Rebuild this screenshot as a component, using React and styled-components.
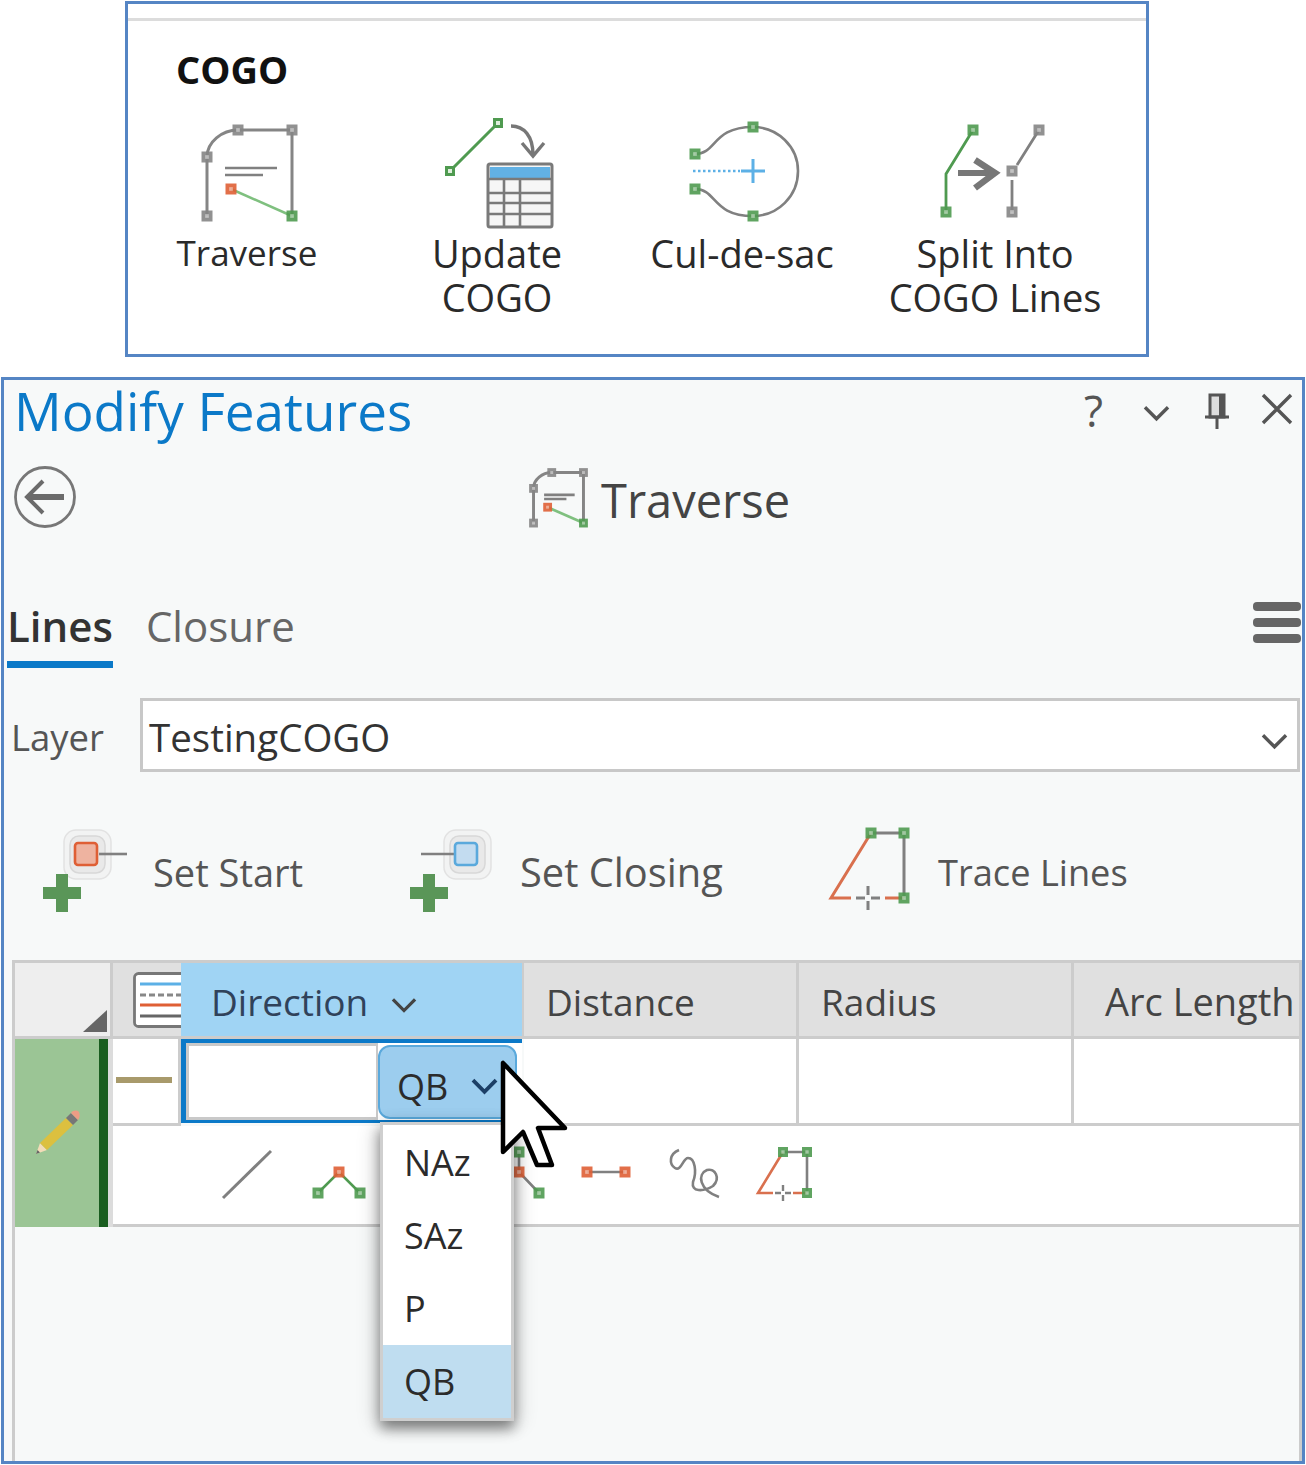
import styled, { createGlobalStyle } from "styled-components";

const GlobalStyle = createGlobalStyle`
  html, body {
    margin: 0;
    padding: 0;
    background: #fff;
  }
  * {
    box-sizing: border-box;
  }
  body {
    font-family: "Open Sans", "Noto Sans", sans-serif;
  }
`;

const GREEN = "#4f9a50";
const GREY = "#858585";
const RED = "#df5f35";

const Page = styled.div`
  width: 1306px;
  height: 1465px;
  padding-top: 1px;
  overflow: hidden;
`;

const Ribbon = styled.section`
  margin-left: 125px;
  width: 1024px;
  height: 356px;
  border: 3px solid #5585c4;
  background: #fff;
`;

const RibbonStrip = styled.div`
  height: 17px;
  border-bottom: 3px solid #dcdcdc;
`;

const RibbonTitle = styled.h2`
  margin: 23px 0 0 48px;
  font-size: 38px;
  line-height: 50px;
  font-weight: 700;
  color: #111;
`;

const ToolRow = styled.div`
  display: flex;
  margin-top: 24px;
`;

const Tool = styled.div`
  display: flex;
  flex-direction: column;
  align-items: center;
  width: ${(p) => p.$w}px;
`;

const ToolLabel = styled.div`
  font-size: ${(p) => p.$size || 38}px;
  line-height: 44px;
  color: #2a2a2a;
  text-align: center;
  white-space: nowrap;
  margin-top: 1px;
`;

const Glyph = styled.svg`
  display: block;
  flex: none;
  width: ${(p) => p.$w}px;
  height: ${(p) => p.$h}px;
  overflow: visible;
`;

const Panel = styled.section`
  margin: 20px 0 0 1px;
  width: 1304px;
  height: 1087px;
  border: 3px solid #5585c4;
  background: #f7f9f9;
  display: flex;
  flex-direction: column;
`;

const TitleBar = styled.header`
  display: flex;
  align-items: center;
  height: 66px;
  padding-left: 10px;
`;

const PanelTitle = styled.h1`
  margin: 0 0 4px;
  font-size: 53px;
  line-height: 62px;
  font-weight: 400;
  color: #0b79c8;
  white-space: nowrap;
`;

const WindowIcons = styled.div`
  margin-left: auto;
  display: flex;
  align-items: center;
  gap: 27px;
  padding-right: 9px;
`;

const HelpMark = styled.span`
  font-size: 44px;
  line-height: 56px;
  font-weight: 500;
  color: #555;
  margin: 0 14px 6px 0;
`;

const PinSlot = styled.span`
  display: block;
  margin: 0 0 2px 8px;
`;

const CloseSlot = styled.span`
  display: block;
  margin: 0 0 8px 4px;
`;

const BackRow = styled.div`
  display: flex;
  align-items: center;
  height: 102px;
  padding-left: 10px;
`;

const ToolHeading = styled.div`
  display: flex;
  align-items: center;
  gap: 14px;
  margin-left: 454px;
  font-size: 47px;
  color: #444;
`;

const HeadingText = styled.span`
  padding-top: 6px;
`;

const TabRow = styled.div`
  display: flex;
  align-items: flex-start;
  padding-top: 50px;
  height: 120px;
`;

const Tab = styled.div`
  height: 70px;
  margin-left: ${(p) => p.$ml}px;
  font-size: 42px;
  line-height: 56px;
  color: ${(p) => (p.$active ? "#333" : "#666")};
  font-weight: ${(p) => (p.$active ? 600 : 400)};
  border-bottom: ${(p) => (p.$active ? "7px solid #0b79c8" : "none")};
`;

const MenuBars = styled.div`
  margin-left: auto;
  margin-right: 1px;
  margin-top: 4px;
  width: 48px;
  display: flex;
  flex-direction: column;
  gap: 7px;
`;

const MenuBar = styled.span`
  display: block;
  height: 9px;
  border-radius: 4px;
  background: #666;
`;

const LayerRow = styled.div`
  display: flex;
  align-items: center;
  margin-top: 30px;
  padding-left: 7px;
`;

const LayerLabel = styled.label`
  width: 129px;
  padding-top: 4px;
  font-size: 36.5px;
  color: #555;
`;

const LayerSelect = styled.div`
  width: 1160px;
  height: 74px;
  border: 3px solid #c8c8c8;
  background: #fff;
  display: flex;
  align-items: center;
  justify-content: space-between;
  padding: 4px 10px 0 6px;
  font-size: 38.5px;
  color: #333;
`;

const ChevronSlot = styled.span`
  display: block;
  margin-top: 8px;
`;

const ActionRow = styled.div`
  display: flex;
  margin-top: 55px;
  height: 85px;
  padding-left: 39px;
`;

const Action = styled.div`
  display: flex;
  align-items: center;
  width: ${(p) => p.$w}px;
  font-size: ${(p) => p.$size}px;
  color: #555;
  white-space: nowrap;
`;

const ActionText = styled.span`
  margin-left: ${(p) => p.$ml}px;
  padding-top: 4px;
`;

const TableWrap = styled.div`
  flex: 1;
  margin: 48px 0 0 8px;
  border-top: 3px solid #ccc;
  border-left: 3px solid #ccc;
  border-right: 3px solid #ccc;
`;

const Grid = styled.div`
  display: grid;
  grid-template-columns: 98px 68px 343px 275px 275px 1fr;
  grid-template-rows: 76px 87px 101px;
`;

const HeadCell = styled.div`
  display: flex;
  align-items: center;
  padding-left: ${(p) => p.$pl || 0}px;
  padding-top: ${(p) => (p.$icon ? 0 : 3)}px;
  background: ${(p) => p.$bg || "#e0e0e0"};
  border-bottom: 3px solid #ccc;
  border-right: ${(p) => (p.$last ? 0 : 3)}px solid #ccc;
  font-size: ${(p) => p.$size || 37}px;
  color: #444;
  white-space: nowrap;
  overflow: hidden;
  position: relative;
`;

const CornerMark = styled.span`
  position: absolute;
  right: 3px;
  bottom: 4px;
  width: 0;
  height: 0;
  border-left: 24px solid transparent;
  border-bottom: 22px solid #666;
`;

const DirectionHead = styled(HeadCell)`
  gap: 24px;
  background: #a0d4f4;
  border-right: 2px solid #ccc;
  color: #30425a;
`;

const EditMarker = styled.div`
  grid-row: 2 / span 2;
  display: flex;
  align-items: center;
  justify-content: center;
  padding-right: 10px;
  background: #9bc595;
  border-right: 5px solid #dcdcdc;
  box-shadow: inset -9px 0 0 #1a5e20;
`;

const Cell = styled.div`
  display: flex;
  align-items: center;
  background: #fff;
  border-bottom: 3px solid #ccc;
  border-right: ${(p) => (p.$last ? 0 : 3)}px solid #ccc;
`;

const LeadCell = styled(Cell)`
  padding: 0 0 2px 3px;
`;

const EditCell = styled.div`
  display: flex;
  background: #fff;
  margin: 0 2px 3px 0;
  border: 0 solid #0b79c8;
  border-width: 4px 0 3px 5px;
  padding: 2px 5px 0 0;
`;

const EditInput = styled.div`
  flex: 1;
  margin-top: -2px;
  border: 3px solid #c9c9c9;
  border-right-width: 2px;
  background: #fff;
`;

const UnitButton = styled.div`
  position: relative;
  width: 139px;
  height: 74px;
  display: flex;
  align-items: center;
  gap: 24px;
  padding: 8px 0 0 17px;
  border: 2px solid #5aa9dc;
  border-radius: 12px;
  background: #9ccdee;
  font-size: 36px;
  color: #2b2b2b;
`;

const UnitMenu = styled.ul`
  position: absolute;
  top: 75px;
  left: 0;
  z-index: 2;
  width: 134px;
  margin: 0;
  padding: 1px 0 0;
  list-style: none;
  border: 3px solid #cfcfcf;
  background: #fff;
  box-shadow: 0 8px 12px rgba(0, 0, 0, 0.38), 6px 4px 18px rgba(0, 0, 0, 0.14),
    -6px 4px 18px rgba(0, 0, 0, 0.14);
`;

const UnitItem = styled.li`
  height: 73px;
  padding-left: 21px;
  font-size: 36px;
  line-height: 73px;
  color: #2b2b2b;
  background: ${(p) => (p.$selected ? "#bfddf0" : "transparent")};
`;

const Cursor = styled.svg`
  position: absolute;
  left: 123px;
  top: 16px;
  z-index: 3;
  width: 66px;
  height: 106px;
  overflow: visible;
`;

const SegmentRow = styled.div`
  grid-column: 2 / -1;
  display: flex;
  gap: 31px;
  padding: 19px 0 0 107px;
  background: #fff;
  border-bottom: 3px solid #ccc;
`;

// small square vertex used by every map icon, coordinates are the picture's own
function Vertex({ x, y, color = GREY, size = 11 }) {
  const h = size / 2;
  return (
    <g>
      <rect x={x - h} y={y - h} width={size} height={size} fill={color} opacity="0.9" />
      <rect x={x - size / 6} y={y - size / 6} width={size / 3} height={size / 3} fill="#fff" opacity="0.45" />
    </g>
  );
}

function TraverseIcon({ w = 124, h = 112, box = "188 118 124 112", bold }) {
  const line = bold ? 5 : 3;
  const size = bold ? 15 : 11;
  return (
    <Glyph viewBox={box} $w={w} $h={h} fill="none">
      <path d="M207 216V157C207 142 222 130 238 130H292V216" stroke={GREY} strokeWidth={line} />
      <path d="M231 189L292 216" stroke="#7fc07f" strokeWidth={line - 0.5} />
      <path d="M225 168H277M225 175H263" stroke="#808080" strokeWidth={line - 0.5} />
      <Vertex x={207} y={157} size={size} />
      <Vertex x={238} y={130} size={size} />
      <Vertex x={292} y={130} size={size} />
      <Vertex x={207} y={216} size={size} />
      <Vertex x={292} y={216} color={GREEN} size={size} />
      <Vertex x={231} y={189} color={RED} size={size} />
    </Glyph>
  );
}

function UpdateIcon() {
  return (
    <Glyph viewBox="435 118 124 112" $w={124} $h={112} fill="none">
      <path d="M450 171L498 123" stroke={GREEN} strokeWidth="3" />
      <rect x="446.5" y="167.5" width="7" height="7" fill="#dfeedd" stroke={GREEN} strokeWidth="3" />
      <rect x="494.5" y="119.5" width="7" height="7" fill="#dfeedd" stroke={GREEN} strokeWidth="3" />
      <path d="M511 126C524 126 533 136 533 155M522 143L533 156L544 143" stroke="#777" strokeWidth="3.4" />
      <rect x="488" y="164" width="64" height="63" rx="2" fill="#f6f6f6" stroke="#7a7a7a" strokeWidth="3" />
      <rect x="490" y="167" width="60" height="11" fill="#62b1e4" />
      <path d="M489 179H551M489 193H551M489 203H551M489 214H551M504 179V226M520 179V226" stroke="#7a7a7a" strokeWidth="2.6" />
    </Glyph>
  );
}

function CulDeSacIcon() {
  return (
    <Glyph viewBox="680 118 124 112" $w={124} $h={112} fill="none">
      <path
        d="M695 154C717 154 712 127 753 127C778 127 798 147 798 171C798 196 778 216 753 216C712 216 717 189 695 189"
        stroke="#808080"
        strokeWidth="2.6"
      />
      <path d="M693 171H740" stroke="#5cb0e6" strokeWidth="2.6" strokeDasharray="2.5 2.5" />
      <path d="M741 171H765M753 159V183" stroke="#5cb0e6" strokeWidth="3" />
      <Vertex x={695} y={154} color={GREEN} />
      <Vertex x={753} y={127} color={GREEN} />
      <Vertex x={695} y={189} color={GREEN} />
      <Vertex x={753} y={216} color={GREEN} />
    </Glyph>
  );
}

function SplitIcon() {
  return (
    <Glyph viewBox="933 118 124 112" $w={124} $h={112} fill="none">
      <path d="M973 130L946 174V212" stroke={GREEN} strokeWidth="2.8" />
      <path d="M958 173H990" stroke="#777" strokeWidth="6" />
      <path d="M975 160L995 173L975 188" stroke="#777" strokeWidth="6.5" />
      <path d="M1039 130L1017 165M1012 180V212" stroke="#808080" strokeWidth="2.8" />
      <Vertex x={973} y={130} color={GREEN} />
      <Vertex x={946} y={212} color={GREEN} />
      <Vertex x={1039} y={130} />
      <Vertex x={1012} y={171} />
      <Vertex x={1012} y={212} />
    </Glyph>
  );
}

function Chevron({ w = 25, h = 14, color = "#555", sw = 3.5 }) {
  return (
    <Glyph viewBox="0 0 26 14" $w={w} $h={h} fill="none">
      <path d="M1 1L13 13L25 1" stroke={color} strokeWidth={sw} />
    </Glyph>
  );
}

function SetPointIcon({ closing }) {
  const fill = closing ? "#c3dcf0" : "#eeb3a0";
  const stroke = closing ? "#5aa9dc" : RED;
  const sq = closing ? 41 : 28;
  return (
    <Glyph viewBox="0 0 84 84" $w={84} $h={84} fill="none">
      <rect x={sq - 7} y="2" width="47" height="49" rx="12" fill="#f2f3f3" stroke="#e2e2e2" strokeWidth="1.5" />
      <rect x={sq - 1} y="8" width="35" height="37" rx="9" fill="#e9e9e9" stroke="#d8d8d8" strokeWidth="1.5" />
      <path d={closing ? "M11 26H45" : "M56 26H84"} stroke="#808080" strokeWidth="2.6" />
      <rect x={sq + 4} y="15" width="22" height="22" rx="3" fill={fill} stroke={stroke} strokeWidth="2.6" />
      <path d="M19 46V84M0 65H38" stroke="#5a9658" strokeWidth="12" />
    </Glyph>
  );
}

function TraceIcon({ w, h, box }) {
  return (
    <Glyph viewBox={box} $w={w} $h={h} fill="none">
      <path d="M870 833H903V898" stroke="#808080" strokeWidth="3" />
      <path d="M870 833L830 898H850M884 898H903" stroke="#d9704e" strokeWidth="3" />
      <path d="M855 898H879M867 886V910" stroke="#808080" strokeWidth="3" strokeDasharray="9 6" />
      <Vertex x={870} y={833} color={GREEN} size={11} />
      <Vertex x={903} y={833} color={GREEN} size={11} />
      <Vertex x={903} y={898} color={GREEN} size={11} />
    </Glyph>
  );
}

const originOf = (i) => `${220 + 89 * i - (i > 1 ? 1 : 0)} 1145 58 58`;

function SegmentIcons() {
  return (
    <SegmentRow>
      <Glyph viewBox={originOf(0)} $w={58} $h={58} fill="none">
        <path d="M223 1198L271 1151" stroke="#808080" strokeWidth="3" />
      </Glyph>
      <Glyph viewBox={originOf(1)} $w={58} $h={58} fill="none">
        <path d="M318 1193L339 1172L360 1193" stroke={GREEN} strokeWidth="2.6" />
        <Vertex x={318} y={1193} color={GREEN} />
        <Vertex x={339} y={1172} color={RED} />
        <Vertex x={360} y={1193} color={GREEN} />
      </Glyph>
      <Glyph viewBox={originOf(2)} $w={58} $h={58} fill="none" />
      <Glyph viewBox={originOf(3)} $w={58} $h={58} fill="none">
        <path d="M518 1152V1172L538 1193" stroke="#808080" strokeWidth="2.6" />
        <Vertex x={518} y={1152} color={GREEN} />
        <Vertex x={518} y={1172} color={RED} />
        <Vertex x={538} y={1193} color={GREEN} />
      </Glyph>
      <Glyph viewBox={originOf(4)} $w={58} $h={58} fill="none">
        <path d="M586 1172H624" stroke="#808080" strokeWidth="2.6" />
        <Vertex x={586} y={1172} color={RED} />
        <Vertex x={624} y={1172} color={RED} />
      </Glyph>
      <Glyph viewBox={originOf(5)} $w={58} $h={58} fill="none">
        <path
          d="M678 1150C668 1154 668 1164 674 1168C680 1172 682 1158 687 1158C694 1158 696 1172 692 1182C690 1192 702 1192 712 1186C720 1178 714 1168 706 1170C696 1174 698 1190 718 1197"
          stroke="#808080"
          strokeWidth="2.6"
        />
      </Glyph>
      <Glyph viewBox={originOf(6)} $w={58} $h={58} fill="none">
        <path d="M782 1152H806V1193" stroke="#808080" strokeWidth="2.6" />
        <path d="M782 1152L757 1193H772M792 1193H806" stroke="#d9704e" strokeWidth="2.6" />
        <path d="M774 1193H790M782 1185V1201" stroke="#808080" strokeWidth="2.4" strokeDasharray="6 4" />
        <Vertex x={782} y={1152} color={GREEN} size={10} />
        <Vertex x={806} y={1152} color={GREEN} size={10} />
        <Vertex x={806} y={1193} color={GREEN} size={10} />
      </Glyph>
    </SegmentRow>
  );
}

export default function App() {
  return (
    <Page>
      <GlobalStyle />
      <Ribbon>
        <RibbonStrip />
        <RibbonTitle>COGO</RibbonTitle>
        <ToolRow>
          <Tool $w={238}>
            <TraverseIcon box="185 118 124 112" />
            <ToolLabel $size={35}>Traverse</ToolLabel>
          </Tool>
          <Tool $w={262}>
            <UpdateIcon />
            <ToolLabel>
              Update
              <br />
              COGO
            </ToolLabel>
          </Tool>
          <Tool $w={228}>
            <CulDeSacIcon />
            <ToolLabel>Cul-de-sac</ToolLabel>
          </Tool>
          <Tool $w={278}>
            <SplitIcon />
            <ToolLabel>
              Split Into
              <br />
              COGO Lines
            </ToolLabel>
          </Tool>
        </ToolRow>
      </Ribbon>

      <Panel>
        <TitleBar>
          <PanelTitle>Modify Features</PanelTitle>
          <WindowIcons>
            <HelpMark>?</HelpMark>
            <Chevron />
            <PinSlot>
              <Glyph viewBox="0 0 26 36" $w={26} $h={36} fill="none">
                <path d="M6 1H20V23H6Z" fill="#ddd" stroke="#555" strokeWidth="3" />
                <path d="M15 1H21V23H15Z" fill="#555" />
                <path d="M1 23H25M13 23V35" stroke="#555" strokeWidth="3" />
              </Glyph>
            </PinSlot>
            <CloseSlot>
              <Glyph viewBox="0 0 32 32" $w={32} $h={32} fill="none">
                <path d="M2 2L30 30M30 2L2 30" stroke="#555" strokeWidth="3.4" />
              </Glyph>
            </CloseSlot>
          </WindowIcons>
        </TitleBar>

        <BackRow>
          <Glyph viewBox="0 0 62 62" $w={62} $h={62} fill="none">
            <circle cx="31" cy="31" r="29.5" stroke="#777" strokeWidth="2.8" />
            <path d="M13 31H50" stroke="#6b6b6b" strokeWidth="6" />
            <path d="M29 15L13 31L29 47" stroke="#6b6b6b" strokeWidth="4" />
          </Glyph>
          <ToolHeading>
            <TraverseIcon w={57} h={57} box="201 124 97 97" bold />
            <HeadingText>Traverse</HeadingText>
          </ToolHeading>
        </BackRow>

        <TabRow>
          <Tab $active $ml={3}>
            Lines
          </Tab>
          <Tab $ml={33}>Closure</Tab>
          <MenuBars>
            <MenuBar />
            <MenuBar />
            <MenuBar />
          </MenuBars>
        </TabRow>

        <LayerRow>
          <LayerLabel>Layer</LayerLabel>
          <LayerSelect>
            TestingCOGO
            <ChevronSlot>
              <Chevron />
            </ChevronSlot>
          </LayerSelect>
        </LayerRow>

        <ActionRow>
          <Action $w={367} $size={38}>
            <SetPointIcon />
            <ActionText $ml={26}>Set Start</ActionText>
          </Action>
          <Action $w={417} $size={39.8}>
            <SetPointIcon closing />
            <ActionText $ml={26}>Set Closing</ActionText>
          </Action>
          <Action $w={400} $size={36.2}>
            <TraceIcon w={84} h={85} box="826 827 84 85" />
            <ActionText $ml={27}>Trace Lines</ActionText>
          </Action>
        </ActionRow>

        <TableWrap>
          <Grid>
            <HeadCell $bg="#eeeeee" $icon>
              <CornerMark />
            </HeadCell>
            <HeadCell $pl={20} $icon $last>
              <Glyph viewBox="0 0 60 56" $w={60} $h={56} fill="none">
                <rect x="1.5" y="1.5" width="57" height="53" rx="4" fill="#fff" stroke="#777" strokeWidth="2.8" />
                <path d="M7 12H55" stroke="#5cb0e6" strokeWidth="2.8" />
                <path d="M7 23H55" stroke="#888" strokeWidth="2.8" strokeDasharray="6 3" />
                <path d="M7 33H55" stroke={RED} strokeWidth="3" />
                <path d="M7 44H55" stroke="#666" strokeWidth="2.8" />
              </Glyph>
            </HeadCell>
            <DirectionHead $pl={30}>
              Direction
              <ChevronSlot>
                <Chevron color="#444" w={24} />
              </ChevronSlot>
            </DirectionHead>
            <HeadCell $pl={22}>Distance</HeadCell>
            <HeadCell $pl={22}>Radius</HeadCell>
            <HeadCell $pl={31} $size={38} $last>
              Arc Length
            </HeadCell>

            <EditMarker>
              <Glyph viewBox="0 0 46 46" $w={46} $h={46} fill="none">
                <path d="M2 44L6 33L13 40Z" fill="#f3dcb8" />
                <path d="M2 44L3.5 40L6 42.5Z" fill="#666" />
                <path d="M6 33L32 8L39 15L13 40Z" fill="#dcc03f" />
                <path d="M32 8L37 3L44 10L39 15Z" fill="#777" />
                <path d="M37 3C39 0 43 0 45 2C46 4 46 8 44 10Z" fill="#ec9c85" />
              </Glyph>
            </EditMarker>
            <LeadCell>
              <Glyph viewBox="0 0 56 6" $w={56} $h={6}>
                <rect width="56" height="6" fill="#a89a6b" />
              </Glyph>
            </LeadCell>
            <EditCell>
              <EditInput />
              <UnitButton>
                QB
                <Chevron color="#1c3f66" sw={4} />
                <UnitMenu>
                  <UnitItem>NAz</UnitItem>
                  <UnitItem>SAz</UnitItem>
                  <UnitItem>P</UnitItem>
                  <UnitItem $selected>QB</UnitItem>
                </UnitMenu>
                <Cursor viewBox="503 1063 66 106">
                  <path
                    d="M503 1063V1152L523 1132L537 1165H552L538 1128H565Z"
                    fill="#fff"
                    stroke="#000"
                    strokeWidth="4.5"
                    strokeLinejoin="round"
                  />
                </Cursor>
              </UnitButton>
            </EditCell>
            <Cell />
            <Cell />
            <Cell $last />

            <SegmentIcons />
          </Grid>
        </TableWrap>
      </Panel>
    </Page>
  );
}
